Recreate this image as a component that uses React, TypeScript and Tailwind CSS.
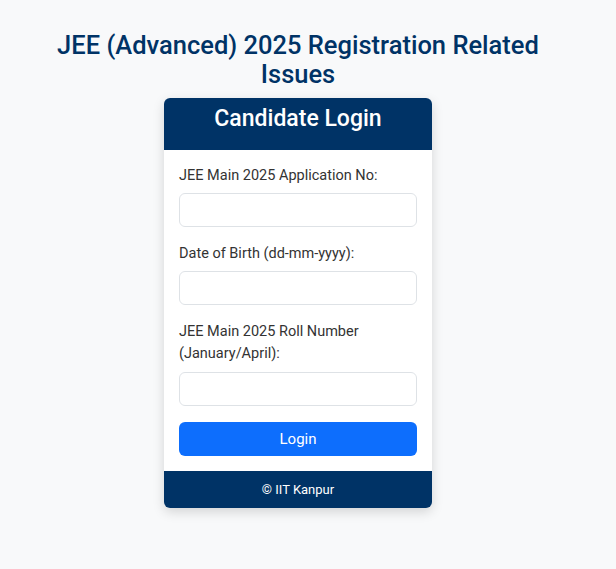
import React from "react";

const fields = [
  { label: "JEE Main 2025 Application No:", type: "text" },
  { label: "Date of Birth (dd-mm-yyyy):", type: "text" },
  { label: "JEE Main 2025 Roll Number (January/April):", type: "text" },
];

const App = () => {
  return (
    // page
    <div className="min-h-screen bg-[#f8f9fa] font-['Roboto',sans-serif]">
      <div className="w-[596px] pt-[31px] pb-10 flex flex-col items-center">
        <h1 className="max-w-[520px] text-center text-[25.5px] leading-[28.5px] font-medium text-[#003366]">
          JEE (Advanced) 2025 Registration Related Issues
        </h1>

        {/* login card */}
        <div className="mt-[10px] w-[268px] rounded-[6px] bg-white shadow-[0_4px_12px_rgba(0,0,0,0.15)] overflow-hidden">
          <div className="bg-[#003366] pt-[7px] pb-[16px] text-center">
            <h2 className="text-[23px] leading-[28.8px] font-medium text-white">
              Candidate Login
            </h2>
          </div>

          <form className="p-[15px]" onSubmit={(e) => e.preventDefault()}>
            {fields.map((f) => (
              <div key={f.label} className="mb-[15.5px]">
                <label className="block mb-[6px] text-[14.5px] leading-[22.5px] text-[#333]">
                  {f.label}
                </label>
                <input
                  type={f.type}
                  className="block w-full h-[34px] rounded-[6px] border border-[#dee2e6] bg-white px-3 text-[15px] outline-none"
                />
              </div>
            ))}
            <button
              type="submit"
              className="mt-[0.5px] w-full h-[34px] rounded-[6px] bg-[#0d6efd] text-white text-[15px]"
            >
              Login
            </button>
          </form>

          <div className="bg-[#003366] h-[37px] flex items-center justify-center text-white text-[13px]">
            © IIT Kanpur
          </div>
        </div>
      </div>
    </div>
  );
};

export default App;
